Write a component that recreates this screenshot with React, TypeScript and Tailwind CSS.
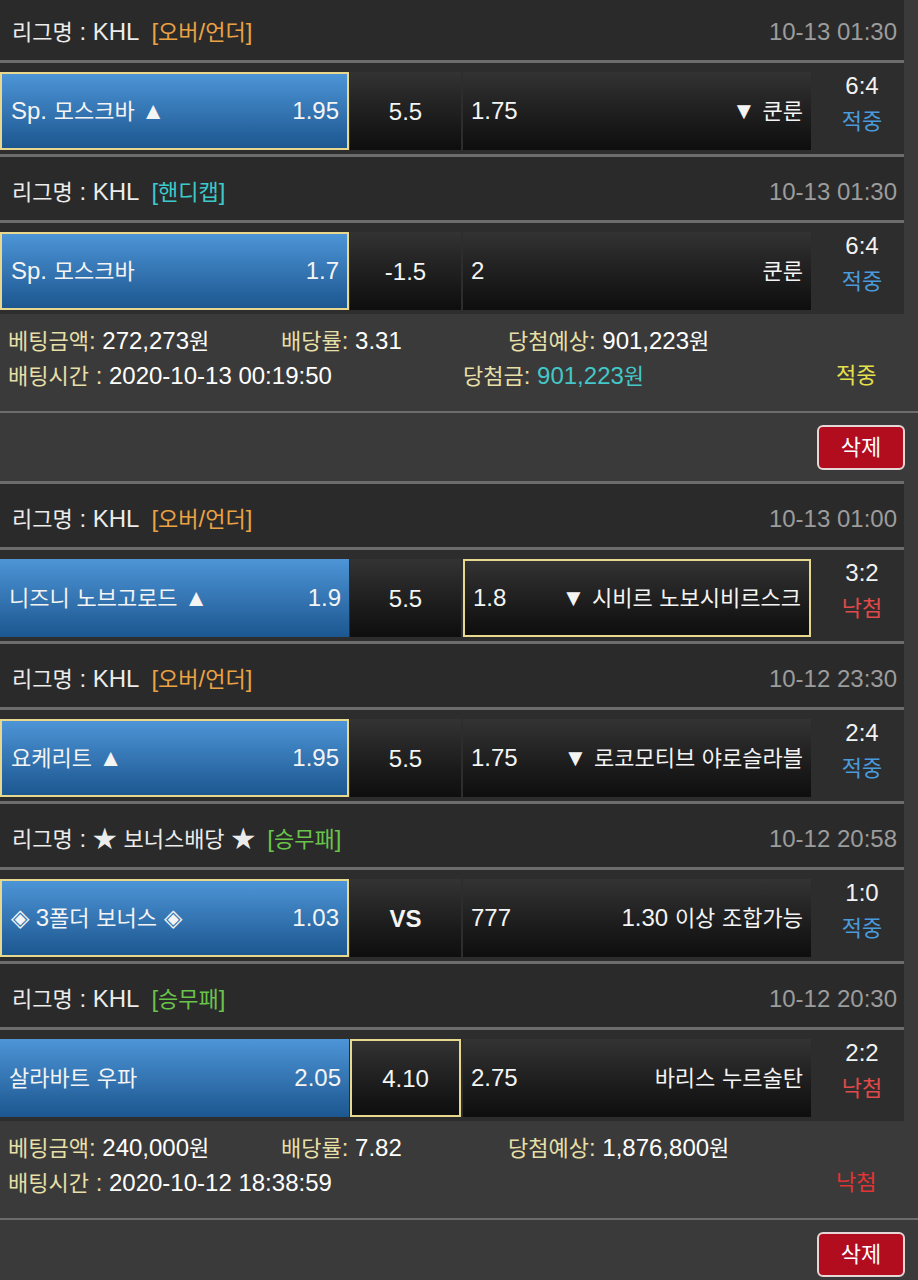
import React from "react";

type Tag = { text: string; color: string };
type Match = {
  league: string;
  tag: Tag;
  date: string;
  home: string;
  homeOdds: string;
  mid: string;
  midBold?: boolean;
  awayOdds: string;
  away: string;
  score: string;
  result: "적중" | "낙첨";
  sel: "home" | "mid" | "away";
};

const ORANGE = "text-[#eba244]";
const CYAN = "text-[#3cc9c9]";
const GREEN = "text-[#69c34a]";

const HANGUL = /([\u3131-\u318E\uAC00-\uD7A3]+)/;

function K({ t }: { t: string }) {
  const parts = t.split(HANGUL);
  return (
    <>
      {parts.map((p, i) =>
        /[\u3131-\u318E\uAC00-\uD7A3]/.test(p) ? (
          <span key={i} className="text-[22px]">
            {p}
          </span>
        ) : (
          <React.Fragment key={i}>{p}</React.Fragment>
        )
      )}
    </>
  );
}

const bet1: Match[] = [
  {
    league: "리그명 : KHL",
    tag: { text: "[오버/언더]", color: ORANGE },
    date: "10-13 01:30",
    home: "Sp. 모스크바 ▲",
    homeOdds: "1.95",
    mid: "5.5",
    awayOdds: "1.75",
    away: "▼ 쿤룬",
    score: "6:4",
    result: "적중",
    sel: "home",
  },
  {
    league: "리그명 : KHL",
    tag: { text: "[핸디캡]", color: CYAN },
    date: "10-13 01:30",
    home: "Sp. 모스크바",
    homeOdds: "1.7",
    mid: "-1.5",
    awayOdds: "2",
    away: "쿤룬",
    score: "6:4",
    result: "적중",
    sel: "home",
  },
];

const bet2: Match[] = [
  {
    league: "리그명 : KHL",
    tag: { text: "[오버/언더]", color: ORANGE },
    date: "10-13 01:00",
    home: "니즈니 노브고로드 ▲",
    homeOdds: "1.9",
    mid: "5.5",
    awayOdds: "1.8",
    away: "▼ 시비르 노보시비르스크",
    score: "3:2",
    result: "낙첨",
    sel: "away",
  },
  {
    league: "리그명 : KHL",
    tag: { text: "[오버/언더]", color: ORANGE },
    date: "10-12 23:30",
    home: "요케리트 ▲",
    homeOdds: "1.95",
    mid: "5.5",
    awayOdds: "1.75",
    away: "▼ 로코모티브 야로슬라블",
    score: "2:4",
    result: "적중",
    sel: "home",
  },
  {
    league: "리그명 : ★ 보너스배당 ★",
    tag: { text: "[승무패]", color: GREEN },
    date: "10-12 20:58",
    home: "◈ 3폴더 보너스 ◈",
    homeOdds: "1.03",
    mid: "VS",
    midBold: true,
    awayOdds: "777",
    away: "1.30 이상 조합가능",
    score: "1:0",
    result: "적중",
    sel: "home",
  },
  {
    league: "리그명 : KHL",
    tag: { text: "[승무패]", color: GREEN },
    date: "10-12 20:30",
    home: "살라바트 우파",
    homeOdds: "2.05",
    mid: "4.10",
    awayOdds: "2.75",
    away: "바리스 누르술탄",
    score: "2:2",
    result: "낙첨",
    sel: "mid",
  },
];

function MatchBlock({ m }: { m: Match }) {
  const selBorder = "border-2 border-[#e8d88e]";
  return (
    <div className="w-[904px]">
      <div className="border-y-[3px] border-[#6c6c6c] bg-[#2a2a2a] h-[69px] flex items-center justify-between pl-[12px] pr-[7px] pt-[6px]">
        <div className="flex items-center text-[#ececec]">
          <span>
            <K t={m.league} />
          </span>
          <span className={`ml-[12px] ${m.tag.color}`}>
            <K t={m.tag.text} />
          </span>
        </div>
        <span className="text-[#9c9c9c]">{m.date}</span>
      </div>
      <div className="h-[91px] bg-[#2d2d2d] flex items-start pt-[9px]">
        <div
          className={`w-[349px] h-[78px] bg-linear-to-b from-[#4d95d7] to-[#1c5790] flex items-center justify-between pl-[9px] pr-[8px] text-[#f4f4f4] ${
            m.sel === "home" ? selBorder : ""
          }`}
        >
          <span>
            <K t={m.home} />
          </span>
          <span>{m.homeOdds}</span>
        </div>
        <div
          className={`ml-[1px] w-[111px] h-[78px] bg-linear-to-b from-[#333333] to-[#0e0e0e] flex items-center justify-center pt-[2px] text-[#f4f4f4] ${
            m.midBold ? "font-bold" : ""
          } ${m.sel === "mid" ? selBorder : ""}`}
        >
          {m.mid}
        </div>
        <div
          className={`ml-[2px] w-[348px] h-[78px] bg-linear-to-b from-[#333333] to-[#0e0e0e] flex items-center justify-between pl-[8px] pr-[8px] text-[#f4f4f4] ${
            m.sel === "away" ? selBorder : ""
          }`}
        >
          <span>{m.awayOdds}</span>
          <span>
            <K t={m.away} />
          </span>
        </div>
        <div className="flex-1 flex flex-col items-center pl-[9px] leading-[36px] -mt-[4px]">
          <span className="text-[#f2f2f2]">{m.score}</span>
          <span
            className={`text-[22px] ${
              m.result === "적중" ? "text-[#4a9bdc]" : "text-[#e04a4a]"
            }`}
          >
            {m.result}
          </span>
        </div>
      </div>
    </div>
  );
}

const LBL = "text-[#e6dfa6] text-[22px]";

function DeleteButton() {
  return (
    <div className="h-[70px] border-t-[2px] border-[#6c6c6c] flex justify-end items-start pt-[12px] pr-[13px]">
      <button className="w-[88px] h-[45px] rounded-[6px] border-2 border-[#e6d6d6] bg-[#b10d1f] text-white text-[22px] flex items-center justify-center">
        삭제
      </button>
    </div>
  );
}

export default function App() {
  return (
    <div className="w-[918px] min-h-[1280px] bg-[#3a3a3a] overflow-hidden text-[24px] leading-none font-['Liberation_Sans','Noto_Sans_CJK_KR',sans-serif]">
      <div className="-mt-[6px]">
        {bet1.map((m, i) => (
          <MatchBlock key={i} m={m} />
        ))}
      </div>
      <div className="h-[97px] pt-[10px] leading-[34px]">
        <div className="flex pl-[8px]">
          <span className="w-[273px]">
            <span className={LBL}>베팅금액</span>
            <span className="text-[#e6dfa6]">:</span>
            <span className="text-white">
              {" "}
              <K t="272,273원" />
            </span>
          </span>
          <span className="w-[227px]">
            <span className={LBL}>배당률</span>
            <span className="text-[#e6dfa6]">:</span>
            <span className="text-white"> 3.31</span>
          </span>
          <span>
            <span className={LBL}>당첨예상</span>
            <span className="text-[#e6dfa6]">:</span>
            <span className="text-white">
              {" "}
              <K t="901,223원" />
            </span>
          </span>
        </div>
        <div className="flex pl-[8px]">
          <span className="w-[455px]">
            <span className={LBL}>배팅시간</span>
            <span className="text-[#e6dfa6]"> :</span>
            <span className="text-white"> 2020-10-13 00:19:50</span>
          </span>
          <span className="w-[373px]">
            <span className={LBL}>당첨금</span>
            <span className="text-[#e6dfa6]">:</span>
            <span className="text-[#43c7c7]">
              {" "}
              <K t="901,223원" />
            </span>
          </span>
          <span className="text-[#e4e04c] text-[22px]">적중</span>
        </div>
      </div>
      <DeleteButton />
      <div>
        {bet2.map((m, i) => (
          <MatchBlock key={i} m={m} />
        ))}
      </div>
      <div className="h-[97px] pt-[10px] leading-[34px]">
        <div className="flex pl-[8px]">
          <span className="w-[273px]">
            <span className={LBL}>베팅금액</span>
            <span className="text-[#e6dfa6]">:</span>
            <span className="text-white">
              {" "}
              <K t="240,000원" />
            </span>
          </span>
          <span className="w-[227px]">
            <span className={LBL}>배당률</span>
            <span className="text-[#e6dfa6]">:</span>
            <span className="text-white"> 7.82</span>
          </span>
          <span>
            <span className={LBL}>당첨예상</span>
            <span className="text-[#e6dfa6]">:</span>
            <span className="text-white">
              {" "}
              <K t="1,876,800원" />
            </span>
          </span>
        </div>
        <div className="flex pl-[8px]">
          <span className="w-[828px]">
            <span className={LBL}>배팅시간</span>
            <span className="text-[#e6dfa6]"> :</span>
            <span className="text-white"> 2020-10-12 18:38:59</span>
          </span>
          <span className="text-[#e03434] text-[22px]">낙첨</span>
        </div>
      </div>
      <DeleteButton />
    </div>
  );
}
